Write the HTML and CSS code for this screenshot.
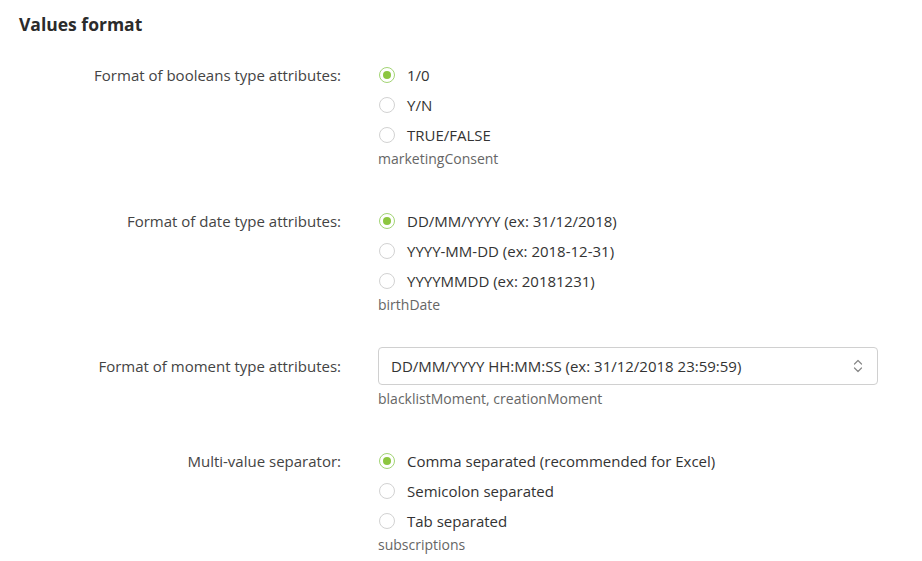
FILE: index.html
```html
<!DOCTYPE html>
<html lang="en">
<head>
    <meta charset="UTF-8">
    <title>Values format</title>
    <link rel="stylesheet" href="styles.css">
</head>
<body>
    <div id="main-content">
        <h2 class="section-title">Values format</h2>

        <div class="form-row">
            <div class="form-label">Format of booleans type attributes:</div>
            <div class="form-field">
                <label class="radio"><span class="radio-dot checked"></span>1/0</label>
                <label class="radio"><span class="radio-dot"></span>Y/N</label>
                <label class="radio"><span class="radio-dot"></span>TRUE/FALSE</label>
                <div class="hint">marketingConsent</div>
            </div>
        </div>

        <div class="form-row">
            <div class="form-label">Format of date type attributes:</div>
            <div class="form-field">
                <label class="radio"><span class="radio-dot checked"></span>DD/MM/YYYY (ex: 31/12/2018)</label>
                <label class="radio"><span class="radio-dot"></span>YYYY-MM-DD (ex: 2018-12-31)</label>
                <label class="radio"><span class="radio-dot"></span>YYYYMMDD (ex: 20181231)</label>
                <div class="hint">birthDate</div>
            </div>
        </div>

        <div class="form-row select-row">
            <div class="form-label">Format of moment type attributes:</div>
            <div class="form-field">
                <div class="select-box">
                    <span>DD/MM/YYYY HH:MM:SS (ex: 31/12/2018 23:59:59)</span>
                    <svg width="10" height="14" viewBox="0 0 10 14" fill="none" stroke="#888"
                    stroke-width="1.2" stroke-linecap="round" stroke-linejoin="round">
                        <path d="M1.5 5 L5 1.5 L8.5 5"></path>
                        <path d="M1.5 9 L5 12.5 L8.5 9"></path>
                    </svg>
                </div>
                <div class="hint">blacklistMoment, creationMoment</div>
            </div>
        </div>

        <div class="form-row last-row">
            <div class="form-label">Multi-value separator:</div>
            <div class="form-field">
                <label class="radio"><span class="radio-dot checked"></span>Comma separated (recommended for Excel)</label>
                <label class="radio"><span class="radio-dot"></span>Semicolon separated</label>
                <label class="radio"><span class="radio-dot"></span>Tab separated</label>
                <div class="hint">subscriptions</div>
            </div>
        </div>
    </div>
</body>
</html>
```

FILE: styles.css
```css
body {
    margin: 0;
    background: #fff;
    font-family: "Open Sans", "DejaVu Sans", sans-serif;
    color: #333;
}

#main-content {
    padding: 12px 19px 0 19px;
}

.section-title {
    font-size: 17.5px;
    font-weight: 700;
    margin: 0 0 24px 0;
    color: #2b2b2b;
    line-height: 24px;
}

.form-row {
    display: grid;
    grid-template-columns: 322px 1fr;
    column-gap: 37px;
    margin-bottom: 38px;
}

.form-label {
    text-align: right;
    font-size: 15px;
    line-height: 30px;
    color: #444;
}

.form-field {
    display: flex;
    flex-direction: column;
}

.radio {
    display: flex;
    align-items: center;
    height: 30px;
    font-size: 15px;
    color: #333;
}

.radio-dot {
    box-sizing: border-box;
    width: 16px;
    height: 16px;
    border: 1px solid #d2d2d2;
    border-radius: 50%;
    margin-right: 12px;
    margin-left: 1px;
    display: flex;
    align-items: center;
    justify-content: center;
}

.radio-dot.checked {
    border: 1.5px solid #a3d474;
}

.radio-dot.checked::after {
    content: "";
    width: 8px;
    height: 8px;
    border-radius: 50%;
    background: #8cc63f;
}

.hint {
    font-size: 14px;
    color: #666;
    line-height: 18px;
}

.select-row {
    margin-top: -5px;
    margin-bottom: 38px;
}

.select-row .form-label {
    line-height: 38px;
}

.select-box {
    box-sizing: border-box;
    width: 500px;
    height: 38px;
    border: 1px solid #d0d0d0;
    border-radius: 4px;
    display: flex;
    align-items: center;
    justify-content: space-between;
    padding: 0 14px 0 12px;
    font-size: 15px;
    color: #333;
    margin-bottom: 5px;
}

.last-row {
    margin-bottom: 0;
}
```
